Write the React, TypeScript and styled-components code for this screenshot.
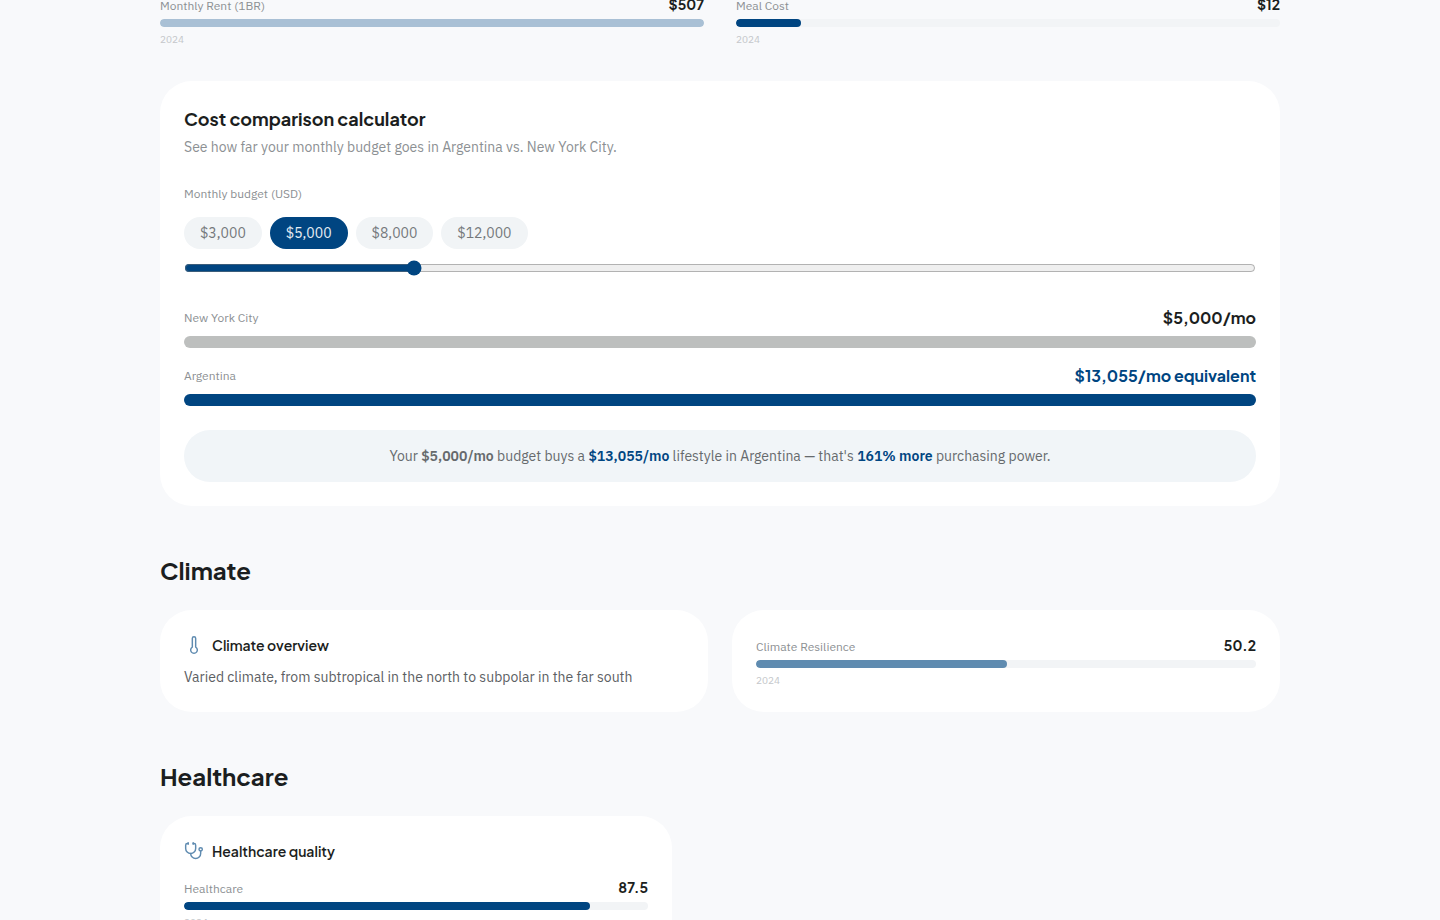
import { useState } from 'react';
import styled, { createGlobalStyle } from 'styled-components';
import { Stethoscope, Thermometer } from 'lucide-react';

const navy = '#004581';
const steel = '#5f8bb0';
const sky = '#a9c0d5';
const ink = '#1b1e20';

const display = `'Plus Jakarta Sans', Inter, 'Liberation Sans', sans-serif`;
const text = `'IBM Plex Sans', Roboto, 'Liberation Sans', sans-serif`;

const GlobalStyle = createGlobalStyle`
  *, *::before, *::after { box-sizing: border-box; }
  body {
    margin: 0;
    background: #f8f9fb;
    color: #5c6063;
    font-family: ${text};
    font-size: 14px;
    line-height: 22px;
  }
  h2, h3, p { margin: 0; }
`;

const Page = styled.main`
  height: 100vh;
  overflow: hidden;
`;

const Content = styled.div`
  max-width: 1168px;
  margin: -7px auto 0;
  padding: 0 24px 48px;
`;

const Columns = styled.div<{ $gap: number }>`
  display: grid;
  grid-template-columns: repeat(2, minmax(0, 1fr));
  gap: ${({ $gap }) => $gap}px;
`;

const Card = styled.section<{ $maxWidth?: number }>`
  padding: 24px;
  border-radius: 32px;
  background: #fff;
  max-width: ${({ $maxWidth }) => ($maxWidth ? `${$maxWidth}px` : 'none')};
`;

const CalculatorCard = styled(Card)`
  margin-top: 34px;
`;

const SectionTitle = styled.h2`
  margin: 48px 0 24px;
  color: ${ink};
  font-family: ${display};
  font-size: 24px;
  line-height: 32px;
  font-weight: 700;
`;

const CardTitle = styled.h3`
  color: ${ink};
  font-family: ${display};
  font-size: 18px;
  line-height: 28px;
  font-weight: 700;
`;

const CardIntro = styled.p`
  margin-top: 3px;
  color: #8c9093;
`;

const IconTitle = styled.h3<{ $gap: number }>`
  display: flex;
  align-items: center;
  gap: 8px;
  margin-bottom: ${({ $gap }) => $gap}px;
  color: ${ink};
  font-family: ${display};
  font-size: 14px;
  line-height: 22px;
  font-weight: 600;

  svg { color: ${steel}; }
`;

const MetricHead = styled.div`
  display: flex;
  align-items: baseline;
  justify-content: space-between;
  height: 22px;
  margin-bottom: 4px;
`;

const Label = styled.span`
  color: #8c9093;
  font-size: 12px;
  line-height: 18px;
`;

const MetricValue = styled.span`
  color: ${ink};
  font-family: ${display};
  font-size: 14px;
  line-height: 22px;
  font-weight: 700;
`;

const Track = styled.div`
  height: 8px;
  border-radius: 4px;
  background: #f2f4f6;
  overflow: hidden;
`;

const Fill = styled.div<{ $color: string }>`
  height: 100%;
  border-radius: 4px;
  background: ${({ $color }) => $color};
`;

const Year = styled.p`
  margin-top: 6px;
  color: #c4c7ca;
  font-size: 10px;
  line-height: 14px;
`;

const BudgetField = styled.div`
  display: flex;
  flex-direction: column;
  margin-top: 27px;
`;

const BudgetLabel = styled.label`
  color: #8c9093;
  font-size: 12px;
  line-height: 18px;
`;

const Presets = styled.div`
  display: flex;
  gap: 8px;
  margin: 14px 0 11px;
`;

const Preset = styled.button<{ $active: boolean }>`
  height: 32px;
  padding: 0 16px;
  border: 0;
  border-radius: 16px;
  background: ${({ $active }) => ($active ? navy : '#f1f4f6')};
  color: ${({ $active }) => ($active ? '#e8eef4' : '#74787b')};
  font-family: ${text};
  font-size: 14px;
  line-height: 20px;
  cursor: pointer;
`;

const Slider = styled.input`
  width: 100%;
  height: 16px;
  margin: 0;
  accent-color: ${navy};
`;

const Comparison = styled.div`
  display: grid;
  gap: 16px;
  margin: 30px 0 24px;
`;

const ComparisonHead = styled.div`
  display: flex;
  align-items: center;
  justify-content: space-between;
  height: 24px;
  margin-bottom: 6px;
`;

const Amount = styled.strong<{ $color: string }>`
  color: ${({ $color }) => $color};
  font-family: ${display};
  font-size: 16px;
  font-weight: 700;
`;

const ComparisonBar = styled.div<{ $color: string }>`
  height: 12px;
  border-radius: 6px;
  background: ${({ $color }) => $color};
`;

const Summary = styled.p`
  padding: 15px 24px;
  border-radius: 26px;
  background: #f1f5f8;
  color: #666a6d;
  text-align: center;

  strong { font-weight: 600; }
`;

const Power = styled.strong`
  color: ${navy};
`;

type MetricProps = { label: string; value: string; percent: number; color?: string; year?: string };

function Metric({ label, value, percent, color = navy, year = '2024' }: MetricProps) {
  return (
    <div>
      <MetricHead>
        <Label>{label}</Label>
        <MetricValue>{value}</MetricValue>
      </MetricHead>
      <Track>
        <Fill $color={color} style={{ width: `${percent}%` }} />
      </Track>
      <Year>{year}</Year>
    </div>
  );
}

const presets = [3000, 5000, 8000, 12000];
const multiplier = 2.611;
const usd = (n: number) => `$${Math.round(n).toLocaleString('en-US')}`;

export default function App() {
  const [budget, setBudget] = useState(5000);
  const local = `${usd(budget * multiplier)}/mo`;

  return (
    <>
      <GlobalStyle />
      <Page>
        <Content>
          <Columns $gap={32}>
            <Metric label="Monthly Rent (1BR)" value="$507" percent={100} color={sky} />
            <Metric label="Meal Cost" value="$12" percent={12} />
          </Columns>

          <CalculatorCard>
            <CardTitle>Cost comparison calculator</CardTitle>
            <CardIntro>See how far your monthly budget goes in Argentina vs. New York City.</CardIntro>
            <BudgetField>
              <BudgetLabel htmlFor="budget">Monthly budget (USD)</BudgetLabel>
              <Presets>
                {presets.map((amount) => (
                  <Preset
                    key={amount}
                    type="button"
                    $active={amount === budget}
                    aria-pressed={amount === budget}
                    onClick={() => setBudget(amount)}
                  >
                    {usd(amount)}
                  </Preset>
                ))}
              </Presets>
              <Slider
                id="budget"
                type="range"
                min={1000}
                max={20000}
                step={500}
                value={budget}
                onChange={(e) => setBudget(Number(e.target.value))}
              />
            </BudgetField>
            <Comparison>
              <div>
                <ComparisonHead>
                  <Label>New York City</Label>
                  <Amount $color={ink}>{usd(budget)}/mo</Amount>
                </ComparisonHead>
                <ComparisonBar $color="#bdbfbe" />
              </div>
              <div>
                <ComparisonHead>
                  <Label>Argentina</Label>
                  <Amount $color={navy}>{local} equivalent</Amount>
                </ComparisonHead>
                <ComparisonBar $color={navy} />
              </div>
            </Comparison>
            <Summary>
              Your <strong>{usd(budget)}/mo</strong> budget buys a <Power>{local}</Power> lifestyle in
              Argentina — that's <Power>161% more</Power> purchasing power.
            </Summary>
          </CalculatorCard>

          <SectionTitle>Climate</SectionTitle>
          <Columns $gap={24}>
            <Card>
              <IconTitle $gap={10}>
                <Thermometer size={20} strokeWidth={1.75} aria-hidden />
                Climate overview
              </IconTitle>
              <p>Varied climate, from subtropical in the north to subpolar in the far south</p>
            </Card>
            <Card>
              <Metric label="Climate Resilience" value="50.2" percent={50.2} color={steel} />
            </Card>
          </Columns>

          <SectionTitle>Healthcare</SectionTitle>
          <Card $maxWidth={512}>
            <IconTitle $gap={14}>
              <Stethoscope size={20} strokeWidth={1.75} aria-hidden />
              Healthcare quality
            </IconTitle>
            <Metric label="Healthcare" value="87.5" percent={87.5} />
          </Card>
        </Content>
      </Page>
    </>
  );
}
